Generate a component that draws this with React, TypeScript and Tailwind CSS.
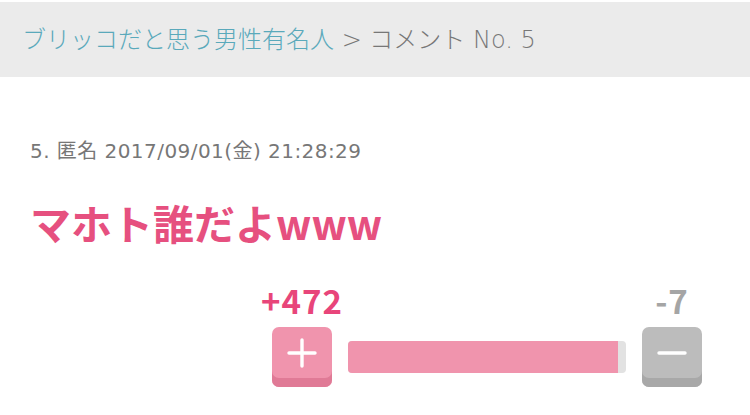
const jp = { fontFamily: '"Noto Sans CJK JP", "Noto Sans", sans-serif' }
const dv = { fontFamily: '"DejaVu Sans", "Noto Sans CJK JP", sans-serif' }

export default function App() {
  return (
    <div className="w-[750px] h-[415px] bg-white overflow-hidden" style={jp}>
      <div className="mt-[2px] h-[75px] bg-[#ebebeb] flex items-center px-[22px] text-[24px] font-extralight whitespace-pre" style={dv}>
        <span className="text-[#5aa9bb]">ブリッコだと思う男性有名人</span>
        <span className="text-[#777777]"> &gt; コメント No. 5</span>
      </div>

      <div className="px-[30px] pt-[64px]">
        <div className="text-[20px] text-[#777777] leading-none tracking-[0.45px]" style={dv}>5. 匿名 2017/09/01(金) 21:28:29</div>
        <div className="mt-[41px] text-[41px] font-bold text-[#e6507f] leading-none">マホト誰だよwww</div>
      </div>

      <div className="flex justify-end items-end gap-[16px] pr-[48px] mt-[41px]">
        <div className="w-[60px] flex flex-col items-center">
          <span className="text-[33px] font-bold text-[#e8457a] leading-none mb-[10px] whitespace-nowrap tracking-[1px]">+472</span>
          <button className="w-[60px] h-[60px] rounded-[7px] bg-[#f094ad] shadow-[inset_0_-9px_0_#e07a96] flex items-center justify-center pb-[9px]">
            <svg width="30" height="30" viewBox="0 0 30 30" stroke="white" strokeWidth="3.4" strokeLinecap="round">
              <line x1="15" y1="2" x2="15" y2="28" />
              <line x1="2" y1="15" x2="28" y2="15" />
            </svg>
          </button>
        </div>
        <div className="w-[278px] h-[32px] mb-[14px] rounded-[4px] bg-[#e2e2e2] overflow-hidden flex">
          <div className="w-[270px] h-full bg-[#f094ad]" />
        </div>
        <div className="w-[60px] flex flex-col items-center">
          <span className="text-[33px] font-bold text-[#a5a5a5] leading-none mb-[10px] whitespace-nowrap tracking-[1px]">-7</span>
          <button className="w-[60px] h-[60px] rounded-[7px] bg-[#bcbcbc] shadow-[inset_0_-9px_0_#a8a8a8] flex items-center justify-center pb-[9px]">
            <svg width="30" height="30" viewBox="0 0 30 30" stroke="white" strokeWidth="3.4" strokeLinecap="round">
              <line x1="2" y1="15" x2="28" y2="15" />
            </svg>
          </button>
        </div>
      </div>
    </div>
  )
}
